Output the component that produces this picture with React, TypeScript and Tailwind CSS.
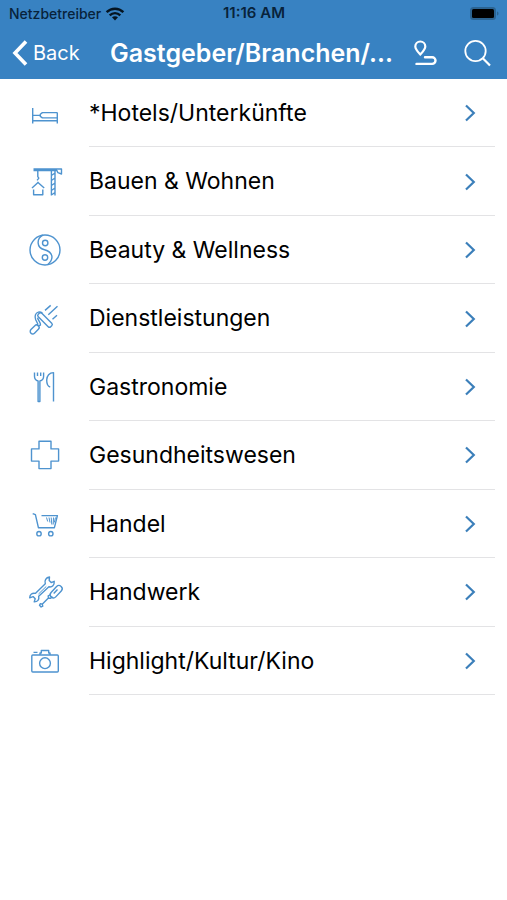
import type { ReactNode } from "react";

interface Category {
  label: string;
  icon: ReactNode;
}

const categories: Category[] = [
  {
    label: "*Hotels/Unterkünfte",
    icon: (
      <>
        <path d="M3.7 11v15.5M28.3 15.5v11M3.7 23.7h24.6M3.7 18.4h7.6" />
        <path d="M28.3 15.6H13.4l-2.1 1.6v2.2l2.1 1.5h14.9" />
      </>
    ),
  },
  {
    label: "Bauen & Wohnen",
    icon: (
      <>
        <path d="M4.5 3h28v5l-3.6-1.3-1-2.2H4.5" />
        <path d="M22.4 4.3v25.2M26 4.3v25.2M22.4 9.5 26 7M22.4 14.5 26 12M22.4 19.5 26 17M22.4 24.5 26 22M22.4 29 26 26.5" />
        <path d="M8.8 4.5v6.2l1 1.4-1.7 2.3M9 15.7v1M3 22l6-5.5 6.2 5.5M4.6 23.5v5.2h9.2v-5.2" />
      </>
    ),
  },
  {
    label: "Beauty & Wellness",
    icon: (
      <>
        <circle cx="16" cy="16" r="15" />
        <path d="M14 1.2C7.5 4.5 7 13.5 15.5 15.8S25.500 25 18.5 30.7" />
        <circle cx="16.2" cy="9" r="2.7" />
        <circle cx="16" cy="23.5" r="2.7" />
      </>
    ),
  },
  {
    label: "Dienstleistungen",
    icon: (
      <>
        <rect x="3.200" y="21.200" width="5" height="10.500" rx="2.500" transform="rotate(45 5.700 26.400)" />
        <path d="M8.300 23.200l.4-2.500-2-4c-1.300-3.600-.4-6.700 2.700-7.600 1.600-.4 3 .2 4 1.100" />
        <path d="M9.500 22.800l2-.8c.4-2.400-2.700-4.700-2.900-7.400" />
        <rect x="7.200" y="14.500" width="17.600" height="5" rx="1.800" transform="rotate(45 16 17)" />
        <path d="M16 7.400l5.700-5M19.300 11.800l9.200-8.500M23.500 16.200l4.500-4" />
      </>
    ),
  },
  {
    label: "Gastronomie",
    icon: (
      <>
        <path d="M5.5 1.5v3.800c0 2.600 1.600 4.200 3.600 4.700v20.500h1.800V10c2.100-.5 3.700-2.100 3.700-4.700V1.500M8.500 1.500V5M11.700 1.500V5" />
        <path d="M24.500 30.500V1.600c-4 0-6.800 3.400-6.800 7.400 0 3.800 1 6.400 3.500 7" />
      </>
    ),
  },
  {
    label: "Gesundheitswesen",
    icon: <path d="M10 2.300h12v7.600h7.600v12.200H22v7.500H10v-7.500H2.500V9.900H10z" />,
  },
  {
    label: "Handel",
    icon: (
      <>
        <path d="M3.700 5.600l2.700 1.100 3 13h16l3-12.100H12.500" />
        <path d="M17.500 9.500l1.200 4M20 9.500l1 5M22.200 9.500l.6 7M24.500 9.500l-.3 7M26.500 9.500l-1.200 5" strokeWidth="1" />
        <circle cx="10" cy="25.700" r="2.200" />
        <circle cx="21.800" cy="25.700" r="2.200" />
      </>
    ),
  },
  {
    label: "Handwerk",
    icon: (
      <>
        <path d="M20.500 1c-3.500.5-5.300 3.400-4.200 6.700L6.300 17.400c-3-.7-5.500 1-5.600 4.400l3.400-1.200 2.100 2.200-1 3.100c3.400.1 5.200-2.300 4.500-5.600L19.900 10.800c3.200.7 5.700-1.600 5.300-5.500l-3 1.300-2-2z" />
        <path d="M9.500 18l7.800-7.600" strokeWidth="1" />
        <rect x="24" y="8.500" width="6.400" height="14.500" rx="3.200" transform="rotate(43 27.200 15.700)" />
        <path d="M28.500 13.500l-3.800 4" />
        <path d="M21.800 18.500l-2.600 1.400.2 2.200 2.300.2 1.500-2M19.400 22.100l-6.200 6.100" />
        <path d="M13.200 28.200l-1.800-.6-.9 1.700 1.600 1.700 1.700-.9z" />
      </>
    ),
  },
  {
    label: "Highlight/Kultur/Kino",
    icon: (
      <>
        <rect x="2.800" y="10" width="26.500" height="17" rx="1" />
        <path d="M11 10V8h1.300V5.500h7.400V8H21v2M4.500 7.400h4" />
        <circle cx="16" cy="18.200" r="5.400" />
      </>
    ),
  },
];

function StatusBar() {
  return (
    <div className="grid h-[27px] grid-cols-[1fr_auto_1fr] items-center pr-2 pl-[9px] text-[#08233b]">
      <div className="flex items-center gap-1 text-sm font-medium">
        <span>Netzbetreiber</span>
        <svg width="20" height="14" viewBox="0 0 20 14" fill="none" stroke="#051420" strokeWidth="2.400">
          <path d="M1.600 5.200c4.800-4.600 12-4.600 16.800 0M4.700 8.300c3-2.900 7.600-2.900 10.600 0" />
          <path d="M10 13.500l-3-3.200c1.700-1.500 4.300-1.500 6 0z" fill="#051420" stroke="none" />
        </svg>
      </div>
      <span className="text-[15px] font-semibold">11:16 AM</span>
      <svg className="justify-self-end" width="30" height="15" viewBox="0 0 30 15">
        <rect x="1" y="1" width="26" height="13" rx="3.500" fill="#2b6391" />
        <rect x="3" y="3" width="22" height="9" rx="1.500" fill="#000" />
        <path d="M28 5.500c2 .5 2 3.500 0 4z" fill="#2b6391" />
      </svg>
    </div>
  );
}

function NavBar() {
  return (
    <nav className="flex h-[52px] items-center pr-4 pl-3 text-white">
      <button type="button" className="flex items-center gap-1 text-xl">
        <svg width="17" height="26" viewBox="0 0 17 26" fill="none" stroke="currentColor" strokeWidth="3.600">
          <path d="M14 1.500L3 13l11 11.500" />
        </svg>
        Back
      </button>
      <h1 className="min-w-0 flex-1 pr-5 text-right text-[25px] leading-8 font-semibold whitespace-nowrap">
        Gastgeber/Branchen/...
      </h1>
      <div className="flex items-center gap-[27px]">
        <button type="button" aria-label="Route">
          <svg width="24" height="26" viewBox="0 0 24 26" fill="none" stroke="currentColor" strokeWidth="2.200">
            <path d="M7.300 14.500C4.500 11.500 2.300 9.300 2.300 6.500a5 5 0 0 1 10 0c0 2.800-2.200 5-5 8z" />
            <path d="M12 17.300h7.200a3.300 3.300 0 0 1 0 6.600H3.500" strokeWidth="2.400" strokeLinecap="round" />
          </svg>
        </button>
        <button type="button" aria-label="Suche">
          <svg width="27" height="28" viewBox="0 0 27 28" fill="none" stroke="currentColor" strokeWidth="1.800">
            <circle cx="11.500" cy="12" r="10.200" />
            <path d="M18.800 19.300l7.200 7.200" strokeWidth="2.200" />
          </svg>
        </button>
      </div>
    </nav>
  );
}

function CategoryRow({ label, icon }: Category) {
  return (
    <li className="flex">
      <a href="#" className="flex flex-1 items-stretch pr-3 pl-[29px]">
        <span className="flex w-[60px] shrink-0 items-center">
          <svg
            className="overflow-visible"
            width="32"
            height="32"
            viewBox="0 0 32 32"
            fill="none"
            stroke="#4e93cf"
            strokeWidth="1.400"
            strokeLinejoin="round"
          >
            {icon}
          </svg>
        </span>
        <span className="flex flex-1 items-center justify-between border-b border-[#e3e3e5] pt-px pr-[18px] text-[23px] text-black">
          {label}
          <svg width="13" height="18" viewBox="0 0 13 18" fill="none" stroke="#3b7fba" strokeWidth="2.200">
            <path d="M2 1.500L9.800 9 2 16.500" />
          </svg>
        </span>
      </a>
    </li>
  );
}

export default function App() {
  return (
    <div className="min-h-screen bg-white font-['Inter',sans-serif]">
      <header className="bg-[#3882c2]">
        <StatusBar />
        <NavBar />
      </header>
      <ul className="grid min-h-[616px] auto-rows-fr">
        {categories.map((category) => (
          <CategoryRow key={category.label} {...category} />
        ))}
      </ul>
    </div>
  );
}
